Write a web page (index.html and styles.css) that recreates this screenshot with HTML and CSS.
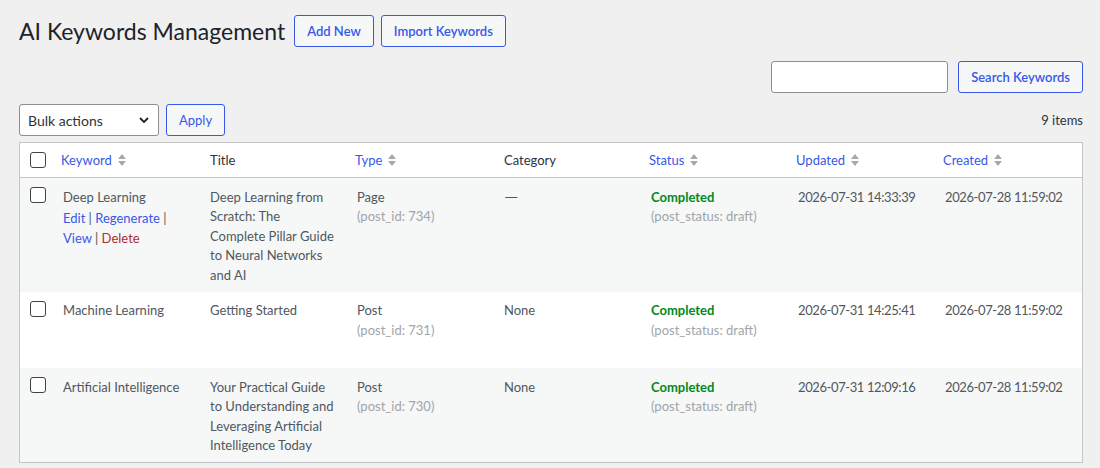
FILE: index.html
```html
<!DOCTYPE html>
<html lang="en">
<head>
    <meta charset="UTF-8">
    <meta name="viewport" content="width=device-width, initial-scale=1.0">
    <title>AI Keywords Management</title>
    <link rel="stylesheet" href="styles.css">
</head>
<body>
    <div class="wrap">
        <div class="page-head">
            <h1>AI Keywords Management</h1>
            <a href="#" class="title-action">Add New</a>
            <a href="#" class="title-action">Import Keywords</a>
        </div>

        <form class="search-box">
            <input type="search" class="search-input">
            <button type="button" class="button">Search Keywords</button>
        </form>

        <div class="tablenav">
            <div class="bulk">
                <label class="select-wrap">
                    <select class="bulk-select">
                        <option>Bulk actions</option>
                        <option>Delete</option>
                    </select>
                    <svg class="chevron" width="12" height="12" viewBox="0 0 12 12"><path d="M2 4l4 4 4-4" fill="none" stroke="#1d2327" stroke-width="1.8"/></svg>
                </label>
                <button type="button" class="button light">Apply</button>
            </div>
            <div class="count">9 items</div>
        </div>

        <table class="list-table">
            <colgroup>
                <col class="col-cb">
                <col><col><col><col><col><col><col>
            </colgroup>
            <thead>
                <tr>
                    <th class="check-column"><input type="checkbox" class="cb"></th>
                    <th class="sortable"><a href="#">Keyword <svg class="sort" width="10" height="16" viewBox="0 0 10 16"><path d="M1 7L5 2L9 7Z M1 9L5 14L9 9Z" fill="#a7aaad"/></svg></a></th>
                    <th>Title</th>
                    <th class="sortable"><a href="#">Type <svg class="sort" width="10" height="16" viewBox="0 0 10 16"><path d="M1 7L5 2L9 7Z M1 9L5 14L9 9Z" fill="#a7aaad"/></svg></a></th>
                    <th>Category</th>
                    <th class="sortable"><a href="#">Status <svg class="sort" width="10" height="16" viewBox="0 0 10 16"><path d="M1 7L5 2L9 7Z M1 9L5 14L9 9Z" fill="#a7aaad"/></svg></a></th>
                    <th class="sortable"><a href="#">Updated <svg class="sort" width="10" height="16" viewBox="0 0 10 16"><path d="M1 7L5 2L9 7Z M1 9L5 14L9 9Z" fill="#a7aaad"/></svg></a></th>
                    <th class="sortable"><a href="#">Created <svg class="sort" width="10" height="16" viewBox="0 0 10 16"><path d="M1 7L5 2L9 7Z M1 9L5 14L9 9Z" fill="#a7aaad"/></svg></a></th>
                </tr>
            </thead>
            <tbody>
                <tr class="alt hover">
                    <td class="check-column"><input type="checkbox" class="cb"></td>
                    <td>Deep Learning
                        <div class="row-actions"><a href="#">Edit</a> | <a href="#">Regenerate</a> | <a href="#">View</a> | <a href="#" class="delete">Delete</a></div>
                    </td>
                    <td>Deep Learning from Scratch: The Complete Pillar Guide to Neural Networks and AI</td>
                    <td>Page<div class="muted">(post_id: 734)</div></td>
                    <td><span class="dash">—</span></td>
                    <td><strong class="done">Completed</strong><div class="muted">(post_status: draft)</div></td>
                    <td class="date">2026-07-31 14:33:39</td>
                    <td class="date">2026-07-28 11:59:02</td>
                </tr>
                <tr>
                    <td class="check-column"><input type="checkbox" class="cb"></td>
                    <td>Machine Learning
                        <div class="row-actions"><a href="#">Edit</a> | <a href="#">Regenerate</a> | <a href="#">View</a> | <a href="#" class="delete">Delete</a></div>
                    </td>
                    <td>Getting Started</td>
                    <td>Post<div class="muted">(post_id: 731)</div></td>
                    <td>None</td>
                    <td><strong class="done">Completed</strong><div class="muted">(post_status: draft)</div></td>
                    <td class="date">2026-07-31 14:25:41</td>
                    <td class="date">2026-07-28 11:59:02</td>
                </tr>
                <tr class="alt">
                    <td class="check-column"><input type="checkbox" class="cb"></td>
                    <td>Artificial Intelligence
                        <div class="row-actions"><a href="#">Edit</a> | <a href="#">Regenerate</a> | <a href="#">View</a> | <a href="#" class="delete">Delete</a></div>
                    </td>
                    <td>Your Practical Guide to Understanding and Leveraging Artificial Intelligence Today</td>
                    <td>Post<div class="muted">(post_id: 730)</div></td>
                    <td>None</td>
                    <td><strong class="done">Completed</strong><div class="muted">(post_status: draft)</div></td>
                    <td class="date">2026-07-31 12:09:16</td>
                    <td class="date">2026-07-28 11:59:02</td>
                </tr>
            </tbody>
        </table>
    </div>
</body>
</html>
```

FILE: styles.css
```css
body {
    background-color: #f0f0f1;
    color: #3c434a;
    font-family: Lato, "Noto Sans", sans-serif;
    font-size: 13px;
    line-height: 1.4;
    margin: 0;
}
a {
    color: #3858e9;
    text-decoration: none;
}
.wrap {
    padding: 15px 17px 0 19px;
}
.page-head {
    display: flex;
    align-items: center;
    height: 32px;
}
.page-head h1 {
    margin: 0 9px 0 0;
    font-size: 23px;
    font-weight: 400;
    color: #1d2327;
    line-height: 32px;
}
.title-action,
.button {
    display: inline-flex;
    align-items: center;
    box-sizing: border-box;
    height: 32px;
    padding: 0 12px;
    border: 1px solid #3858e9;
    border-radius: 3px;
    background-color: #f6f7f7;
    color: #3858e9;
    font-family: inherit;
    font-size: 13px;
    font-weight: 600;
    cursor: pointer;
}
.title-action + .title-action {
    margin-left: 7px;
}
.button.light {
    font-weight: 400;
}
.search-box {
    display: flex;
    justify-content: flex-end;
    gap: 10px;
    margin: 14px 0 0;
}
.search-input {
    box-sizing: border-box;
    width: 177px;
    height: 32px;
    border: 1px solid #8c8f94;
    border-radius: 3px;
    background: #fff;
    margin: 0;
}
.tablenav {
    display: flex;
    align-items: center;
    justify-content: space-between;
    margin-top: 11px;
}
.bulk {
    display: flex;
    gap: 7px;
}
.select-wrap {
    position: relative;
    display: block;
}
.bulk-select {
    appearance: none;
    box-sizing: border-box;
    width: 140px;
    height: 32px;
    padding: 0 24px 0 8px;
    border: 1px solid #8c8f94;
    border-radius: 3px;
    background: #fff;
    color: #2c3338;
    font-family: inherit;
    font-size: 14px;
}
.chevron {
    position: absolute;
    right: 9px;
    top: 10px;
    pointer-events: none;
}
.count {
    color: #2c3338;
    font-size: 13px;
}
.list-table {
    width: 100%;
    margin-top: 6px;
    border: 1px solid #c3c4c7;
    border-spacing: 0;
    table-layout: fixed;
    background-color: #fff;
}
.col-cb {
    width: 33px;
}
.list-table th {
    text-align: left;
    font-weight: 400;
    color: #2c3338;
    padding: 8px 10px;
    line-height: 18px;
    border-bottom: 1px solid #c3c4c7;
}
.list-table th.sortable {
    padding-left: 8px;
}
.list-table th a {
    display: inline-flex;
    align-items: center;
    gap: 5px;
}
.list-table td {
    vertical-align: top;
    padding: 9.5px 10px 6.5px;
    line-height: 19.5px;
    color: #50575e;
}
.list-table td.date {
    letter-spacing: -0.4px;
}
.list-table tr.alt td {
    background-color: #f6f7f7;
}
.list-table .check-column {
    padding: 9px 0 0 10px;
    vertical-align: top;
}
.list-table th.check-column {
    padding: 8px 0 8px 10px;
    vertical-align: middle;
}
.cb {
    appearance: none;
    display: block;
    width: 16px;
    height: 16px;
    margin: 0;
    border: 1px solid #3c434a;
    border-radius: 3px;
    background: #fff;
    box-sizing: border-box;
}
.row-actions {
    padding-top: 1px;
    line-height: 20px;
    color: #50575e;
    visibility: hidden;
}
tr.hover .row-actions {
    visibility: visible;
}
.row-actions .delete {
    color: #b32d2e;
}
.dash {
    display: inline-block;
    transform: scaleX(1.4);
    transform-origin: left center;
}
.muted {
    color: #a0a5aa;
}
.done {
    color: #008a20;
    font-weight: 700;
}
```
